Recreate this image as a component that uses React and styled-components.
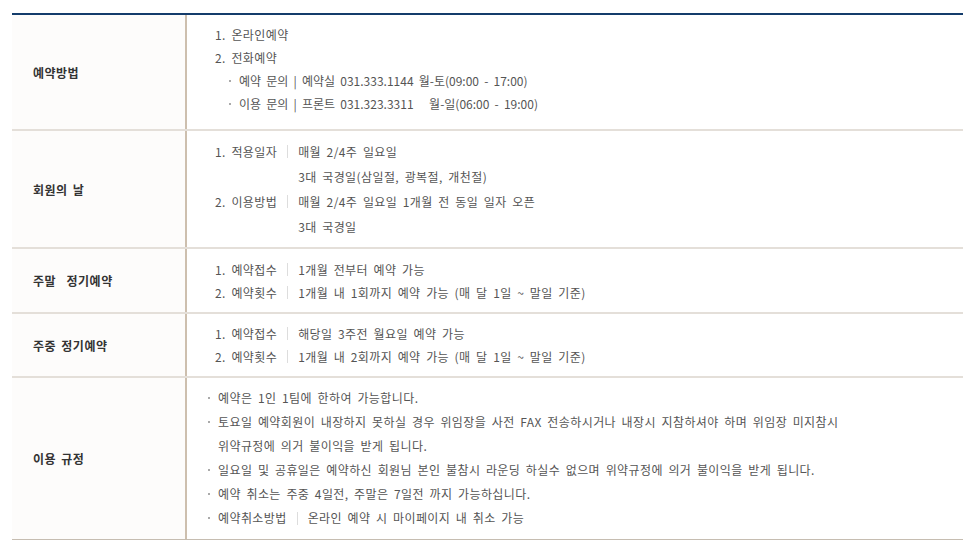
import React from 'react';
import styled, { createGlobalStyle } from 'styled-components';

const GlobalStyle = createGlobalStyle`
  body {
    margin: 0;
    background: #fff;
    font-family: "Noto Sans CJK KR", "Noto Sans", sans-serif;
    font-size: 12px;
    color: #555;
  }
`;

const Wrap = styled.div`
  padding: 13px 11px 0 12px;
`;

const Table = styled.div`
  border-top: 2px solid #143c6b;
  border-bottom: 1px solid #c6bdb1;
`;

const Row = styled.div`
  display: grid;
  grid-template-columns: 175px 1fr;
  border-bottom: ${({ $last }) => ($last ? 'none' : '2px solid #e4dfd9')};
`;

const Head = styled.div`
  display: flex;
  align-items: center;
  padding-left: 21px;
  background: #fdfcfb;
  border-right: 2px solid #cdbfae;
  font-size: 12px;
  font-weight: 700;
  color: #333;
  letter-spacing: 0.5px;
  word-spacing: 2px;
`;

const Body = styled.div`
  padding: ${({ $pad }) => $pad || '8px 0 8px 28px'};
  letter-spacing: 0.4px;
  word-spacing: 2.5px;
`;

const Line = styled.div`
  height: ${({ $h }) => $h || 23}px;
  line-height: ${({ $h }) => $h || 23}px;
  white-space: pre;
  padding-left: ${({ $indent }) => $indent || 0}px;
  letter-spacing: ${({ $tight }) => ($tight ? '0' : 'inherit')};
  display: flex;
  align-items: center;
`;

const Dot = styled.span`
  display: inline-block;
  width: 2px;
  height: 2px;
  background: #aaa;
  margin-right: 8px;
`;

const Terms = styled.div`
  display: grid;
  grid-template-columns: max-content 1px 1fr;
  column-gap: 10px;
  align-items: start;
`;

const Term = styled.div`
  height: ${({ $h }) => $h}px;
  line-height: ${({ $h }) => $h}px;
  white-space: pre;
`;

const Sep = styled.span`
  display: inline-block;
  width: 1px;
  height: 13px;
  background: #ddd;
  margin: 0 10px;
  vertical-align: middle;
`;

const Bar = styled.div`
  width: 1px;
  height: 13px;
  background: #ddd;
  margin-top: ${({ $h }) => ($h - 13) / 2}px;
`;

const Values = styled.div``;

function TermList({ items, h }) {
  return (
    <Terms>
      {items.map((it) => (
        <React.Fragment key={it.label}>
          <Term $h={h}>{it.label}</Term>
          <Bar $h={h} />
          <Values>
            {it.values.map((v) => (
              <Term $h={h} key={v}>{v}</Term>
            ))}
          </Values>
        </React.Fragment>
      ))}
    </Terms>
  );
}

export default function App() {
  return (
    <>
      <GlobalStyle />
      <Wrap>
        <Table>
          <Row>
            <Head>예약방법</Head>
            <Body $pad="8px 0 14px 28px">
              <Line>1. 온라인예약</Line>
              <Line>2. 전화예약</Line>
              <Line $indent={14} $tight><Dot />예약 문의 | 예약실 031.333.1144 월-토(09:00 - 17:00)</Line>
              <Line $indent={14} $tight><Dot />이용 문의 | 프론트 031.323.3311   월-일(06:00 - 19:00)</Line>
            </Body>
          </Row>
          <Row>
            <Head>회원의 날</Head>
            <Body>
              <TermList
                h={25}
                items={[
                  { label: '1. 적용일자', values: ['매월 2/4주 일요일', '3대 국경일(삼일절, 광복절, 개천절)'] },
                  { label: '2. 이용방법', values: ['매월 2/4주 일요일 1개월 전 동일 일자 오픈', '3대 국경일'] },
                ]}
              />
            </Body>
          </Row>
          <Row>
            <Head>주말&nbsp;&nbsp;정기예약</Head>
            <Body $pad="9px 0 8px 28px">
              <TermList
                h={23}
                items={[
                  { label: '1. 예약접수', values: ['1개월 전부터 예약 가능'] },
                  { label: '2. 예약횟수', values: ['1개월 내 1회까지 예약 가능 (매 달 1일 ~ 말일 기준)'] },
                ]}
              />
            </Body>
          </Row>
          <Row>
            <Head>주중 정기예약</Head>
            <Body $pad="8px 0 8px 28px">
              <TermList
                h={23}
                items={[
                  { label: '1. 예약접수', values: ['해당일 3주전 월요일 예약 가능'] },
                  { label: '2. 예약횟수', values: ['1개월 내 2회까지 예약 가능 (매 달 1일 ~ 말일 기준)'] },
                ]}
              />
            </Body>
          </Row>
          <Row $last>
            <Head>이용 규정</Head>
            <Body $pad="8px 0 9px 21px">
              <Line $h={24}><Dot />예약은 1인 1팀에 한하여 가능합니다.</Line>
              <Line $h={24}><Dot />토요일 예약회원이 내장하지 못하실 경우 위임장을 사전 FAX 전송하시거나 내장시 지참하셔야 하며 위임장 미지참시</Line>
              <Line $h={24} $indent={10}>위약규정에 의거 불이익을 받게 됩니다.</Line>
              <Line $h={24}><Dot />일요일 및 공휴일은 예약하신 회원님 본인 불참시 라운딩 하실수 없으며 위약규정에 의거 불이익을 받게 됩니다.</Line>
              <Line $h={24}><Dot />예약 취소는 주중 4일전, 주말은 7일전 까지 가능하십니다.</Line>
              <Line $h={24}><Dot />예약취소방법<Sep />온라인 예약 시 마이페이지 내 취소 가능</Line>
            </Body>
          </Row>
        </Table>
      </Wrap>
    </>
  );
}
